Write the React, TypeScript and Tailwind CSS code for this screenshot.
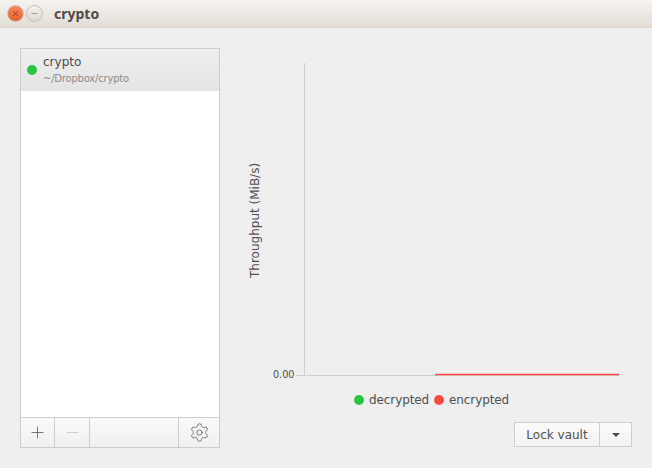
import { Minus, Plus, Settings, X } from 'lucide-react';

export default function App() {
  return (
    <div className="w-[652px] h-[468px] overflow-hidden bg-[#efefef] font-['DejaVu_Sans',sans-serif] text-[#505050]">
      {/* Title bar */}
      <div className="h-[28px] flex items-center pl-[7px] bg-gradient-to-b from-[#f5f3ef] to-[#e2ddd6] border-b border-[#d8d4ce]">
        <div className="w-[17px] h-[17px] rounded-full bg-gradient-to-b from-[#f58a5f] to-[#ea5f2c] border border-[#c9c4bb] flex items-center justify-center">
          <X size={9} strokeWidth={2} className="text-[#6b2c12]" />
        </div>
        <div className="ml-[2px] w-[17px] h-[17px] rounded-full bg-gradient-to-b from-[#f4f2ee] to-[#dcd8d1] border border-[#c4bfb7] flex items-center justify-center">
          <Minus size={9} strokeWidth={1.5} className="text-[#6a665f]" />
        </div>
        <span className="ml-[11px] text-[14px] font-bold font-['Noto_Sans',sans-serif] text-[#4f4b45]">crypto</span>
      </div>

      <div className="flex pl-[20px] pt-[20px]">
        {/* Vault list */}
        <div className="w-[200px] h-[400px] flex flex-col border border-[#cdcdcd] bg-white">
          <div className="h-[42px] flex items-center bg-gradient-to-b from-[#efefef] to-[#e4e4e4]">
            <span className="ml-[6px] w-[10px] h-[10px] rounded-full bg-[#26c73f]" />
            <div className="ml-[6px] flex flex-col -mt-[1px]">
              <span className="text-[12px] leading-[15px] text-[#4a4a4a]">crypto</span>
              <span className="mt-[3px] text-[10px] leading-[12px] tracking-[-0.2px] text-[#8c8c8c]">~/Dropbox/crypto</span>
            </div>
          </div>
          <div className="flex-1" />
          <div className="h-[30px] flex border-t border-[#cdcdcd] bg-gradient-to-b from-[#fafafa] to-[#f0f0f0]">
            <div className="w-[34px] flex items-center justify-center border-r border-[#cdcdcd]">
              <Plus size={19} strokeWidth={1} className="text-[#555555]" />
            </div>
            <div className="w-[35px] flex items-center justify-center border-r border-[#cdcdcd]">
              <Minus size={19} strokeWidth={1} className="text-[#c4c4c4]" />
            </div>
            <div className="flex-1 border-r border-[#cdcdcd]" />
            <div className="w-[40px] flex items-center justify-center">
              <Settings size={21} strokeWidth={1} className="text-[#666666]" />
            </div>
          </div>
        </div>

        {/* Chart side */}
        <div className="w-[432px] flex flex-col">
          <svg width="412" height="336" className="block font-['DejaVu_Sans',sans-serif]">
            <line x1="84.5" y1="15" x2="84.5" y2="327" stroke="#cfcfcf" />
            <line x1="76" y1="327.5" x2="400" y2="327.5" stroke="#cfcfcf" />
            <line x1="215" y1="326.5" x2="399" y2="326.5" stroke="#fb4a44" strokeWidth="1.5" />
            <text x="74.5" y="330" textAnchor="end" fontSize="9.7" fill="#505050">0.00</text>
            <text transform="translate(39 230) rotate(-90)" fontSize="12" fill="#505050">Throughput (MiB/s)</text>
          </svg>
          <div className="mt-[8px] ml-[134px] flex items-center text-[12px] leading-[16px] tracking-[-0.1px]">
            <span className="w-[10px] h-[10px] rounded-full bg-[#26c73f]" />
            <span className="ml-[5px]">decrypted</span>
            <span className="ml-[5px] w-[10px] h-[10px] rounded-full bg-[#fb4a44]" />
            <span className="ml-[5px]">encrypted</span>
          </div>
          <div className="mt-[14px] ml-[294px] w-[118px] h-[25px] flex border border-[#cfcfcf] bg-gradient-to-b from-[#fbfbfb] to-[#f3f3f3]">
            <div className="w-[85px] flex items-center justify-center border-r border-[#cfcfcf] text-[12px]">Lock vault</div>
            <div className="flex-1 flex items-center justify-center">
              <span className="w-0 h-0 border-l-[4px] border-r-[4px] border-t-[4px] border-l-transparent border-r-transparent border-t-[#4a4a4a]" />
            </div>
          </div>
        </div>
      </div>
    </div>
  );
}
